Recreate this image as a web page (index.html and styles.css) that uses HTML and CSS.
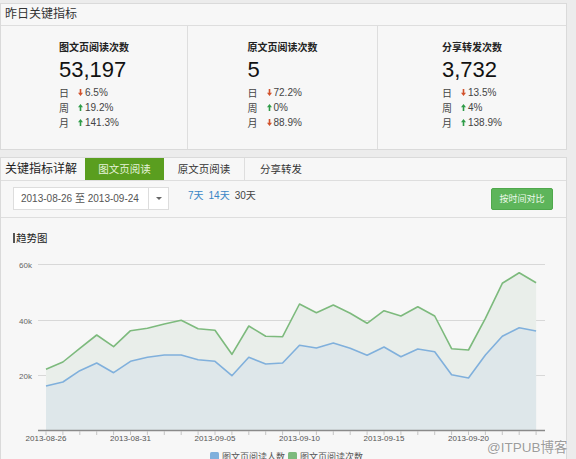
FILE: index.html
```html
<!DOCTYPE html>
<html lang="zh-CN">
<head>
<meta charset="utf-8">
<title>昨日关键指标</title>
<link rel="stylesheet" href="styles.css">
</head>
<body>
<div class="page">
  <section class="panel summary">
    <div class="summary-hd">昨日关键指标</div>
    <div class="metrics">
      <div class="metric">
        <div class="metric-inner">
          <div class="metric-title">图文页阅读次数</div>
          <div class="metric-value">53,197</div>
          <div class="metric-rows">
            <div class="row"><span class="row-label">日</span><svg class="arrow down" viewBox="0 0 5 7"><path d="M2.5 7 L5 3.8 H3.3 V0 H1.7 V3.8 H0 Z"/></svg><span>6.5%</span></div>
            <div class="row"><span class="row-label">周</span><svg class="arrow up" viewBox="0 0 5 7"><path d="M2.5 0 L5 3.2 H3.3 V7 H1.7 V3.2 H0 Z"/></svg><span>19.2%</span></div>
            <div class="row"><span class="row-label">月</span><svg class="arrow up" viewBox="0 0 5 7"><path d="M2.5 0 L5 3.2 H3.3 V7 H1.7 V3.2 H0 Z"/></svg><span>141.3%</span></div>
          </div>
        </div>
      </div>
      <div class="metric">
        <div class="metric-inner">
          <div class="metric-title">原文页阅读次数</div>
          <div class="metric-value">5</div>
          <div class="metric-rows">
            <div class="row"><span class="row-label">日</span><svg class="arrow down" viewBox="0 0 5 7"><path d="M2.5 7 L5 3.8 H3.3 V0 H1.7 V3.8 H0 Z"/></svg><span>72.2%</span></div>
            <div class="row"><span class="row-label">周</span><svg class="arrow up" viewBox="0 0 5 7"><path d="M2.5 0 L5 3.2 H3.3 V7 H1.7 V3.2 H0 Z"/></svg><span>0%</span></div>
            <div class="row"><span class="row-label">月</span><svg class="arrow down" viewBox="0 0 5 7"><path d="M2.5 7 L5 3.8 H3.3 V0 H1.7 V3.8 H0 Z"/></svg><span>88.9%</span></div>
          </div>
        </div>
      </div>
      <div class="metric">
        <div class="metric-inner">
          <div class="metric-title">分享转发次数</div>
          <div class="metric-value">3,732</div>
          <div class="metric-rows">
            <div class="row"><span class="row-label">日</span><svg class="arrow down" viewBox="0 0 5 7"><path d="M2.5 7 L5 3.8 H3.3 V0 H1.7 V3.8 H0 Z"/></svg><span>13.5%</span></div>
            <div class="row"><span class="row-label">周</span><svg class="arrow up" viewBox="0 0 5 7"><path d="M2.5 0 L5 3.2 H3.3 V7 H1.7 V3.2 H0 Z"/></svg><span>4%</span></div>
            <div class="row"><span class="row-label">月</span><svg class="arrow up" viewBox="0 0 5 7"><path d="M2.5 0 L5 3.2 H3.3 V7 H1.7 V3.2 H0 Z"/></svg><span>138.9%</span></div>
          </div>
        </div>
      </div>
    </div>
  </section>

  <section class="panel detail">
    <div class="tabs">
      <div class="tabs-title">关键指标详解</div>
      <div class="tab active">图文页阅读</div>
      <div class="tab plain">原文页阅读</div>
      <div class="tab last">分享转发</div>
    </div>
    <div class="toolbar">
      <div class="datebox">
        <div class="date-text">2013-08-26 至 2013-09-24</div>
        <div class="caret"><span class="caret-tri"></span></div>
      </div>
      <div class="ranges">
        <span class="range link">7天</span>
        <span class="range link">14天</span>
        <span class="range cur">30天</span>
      </div>
      <div class="compare-btn">按时间对比</div>
    </div>
    <div class="trend-title"><span class="trend-bar"></span>趋势图</div>
    <svg class="chart" width="565" height="220" viewBox="1 244 565 220">
      <g class="grid">
        <line x1="38" y1="264.5" x2="545" y2="264.5"/>
        <line x1="38" y1="320.5" x2="545" y2="320.5"/>
        <line x1="38" y1="375.5" x2="545" y2="375.5"/>
      </g>
      <g class="ylabels">
        <text x="32" y="267.5">60k</text>
        <text x="32" y="323.5">40k</text>
        <text x="32" y="378.5">20k</text>
      </g>
      <polygon class="area-green" points="46,369.3 62.9,362 79.8,348.3 96.7,335 113.6,346.7 130.5,330.7 147.4,328.3 164.3,324 181.2,320.3 198.1,328.7 215,330.3 231.9,354.3 248.8,326 265.7,336.3 282.6,336.7 299.5,304 316.4,312.7 333.3,305 350.2,313.3 367.1,323.3 384,310.7 400.9,316 417.8,306.7 434.7,316 451.6,348.7 468.5,350 485.4,318.3 502.3,283.3 519.2,272.7 536.1,282.7 536.1,430 46,430"/>
      <polygon class="area-blue" points="46,386 62.9,382 79.8,370.7 96.7,363 113.6,372.7 130.5,361.3 147.4,357.3 164.3,355 181.2,355 198.1,359.7 215,361.3 231.9,375.7 248.8,357.3 265.7,364 282.6,363 299.5,345.3 316.4,348 333.3,343 350.2,348.3 367.1,355.3 384,347 400.9,356.7 417.8,349 434.7,351.7 451.6,374.7 468.5,378 485.4,355 502.3,336.3 519.2,327.7 536.1,331 536.1,430 46,430"/>
      <polyline class="line-green" points="46,369.3 62.9,362 79.8,348.3 96.7,335 113.6,346.7 130.5,330.7 147.4,328.3 164.3,324 181.2,320.3 198.1,328.7 215,330.3 231.9,354.3 248.8,326 265.7,336.3 282.6,336.7 299.5,304 316.4,312.7 333.3,305 350.2,313.3 367.1,323.3 384,310.7 400.9,316 417.8,306.7 434.7,316 451.6,348.7 468.5,350 485.4,318.3 502.3,283.3 519.2,272.7 536.1,282.7"/>
      <polyline class="line-blue" points="46,386 62.9,382 79.8,370.7 96.7,363 113.6,372.7 130.5,361.3 147.4,357.3 164.3,355 181.2,355 198.1,359.7 215,361.3 231.9,375.7 248.8,357.3 265.7,364 282.6,363 299.5,345.3 316.4,348 333.3,343 350.2,348.3 367.1,355.3 384,347 400.9,356.7 417.8,349 434.7,351.7 451.6,374.7 468.5,378 485.4,355 502.3,336.3 519.2,327.7 536.1,331"/>
      <line class="axis" x1="38" y1="430.5" x2="545" y2="430.5"/>
      <path class="ticks" d="M46 431V435M62.9 431V435M79.8 431V435M96.7 431V435M113.6 431V435M130.5 431V435M147.4 431V435M164.3 431V435M181.2 431V435M198.1 431V435M215 431V435M231.9 431V435M248.8 431V435M265.7 431V435M282.6 431V435M299.5 431V435M316.4 431V435M333.3 431V435M350.2 431V435M367.1 431V435M384 431V435M400.9 431V435M417.8 431V435M434.7 431V435M451.6 431V435M468.5 431V435M485.4 431V435M502.3 431V435M519.2 431V435M536.1 431V435"/>
      <g class="xlabels">
        <text x="46" y="441">2013-08-26</text>
        <text x="130.5" y="441">2013-08-31</text>
        <text x="215" y="441">2013-09-05</text>
        <text x="299.5" y="441">2013-09-10</text>
        <text x="384" y="441">2013-09-15</text>
        <text x="468.5" y="441">2013-09-20</text>
      </g>
      <g class="legend">
        <rect class="lg-blue" x="210" y="452" width="9" height="9" rx="1.5"/>
        <text x="222" y="460">图文页阅读人数</text>
        <rect class="lg-green" x="288" y="452" width="9" height="9" rx="1.5"/>
        <text x="300" y="460">图文页阅读次数</text>
      </g>
    </svg>
  </section>
</div>
<div class="watermark">@ITPUB博客</div>
</body>
</html>
```
FILE: styles.css
```css
* { box-sizing: border-box; }

body {
  margin: 0;
  width: 576px;
  height: 459px;
  overflow: hidden;
  position: relative;
  background: #ececec;
  font-family: "Liberation Sans", "Noto Sans CJK SC", sans-serif;
  color: #333;
}

.page {
  padding-top: 3px;
  width: 567px;
}

.panel {
  background: #f7f7f7;
  border: 1px solid #dadada;
}

.summary { height: 147px; }

.summary-hd {
  height: 22px;
  border-bottom: 1px solid #dedede;
  font-size: 12px;
  line-height: 21px;
  padding-left: 4px;
  color: #333;
}

.metrics {
  display: grid;
  grid-template-columns: 186px 190px 189px;
  height: 123px;
}

.metric {
  display: flex;
  justify-content: center;
  padding-top: 15px;
}

.metric + .metric { border-left: 1px solid #dedede; }

.metric-title {
  font-size: 10px;
  font-weight: bold;
  line-height: 14px;
  color: #222;
}

.metric-value {
  font-size: 22px;
  line-height: 26px;
  margin-top: 2px;
  color: #111;
}

.metric-rows { margin-top: 2px; }

.row {
  display: flex;
  align-items: center;
  height: 15px;
  font-size: 10px;
  color: #444;
}

.row-label { width: 19px; }

.arrow {
  width: 5px;
  height: 7px;
  margin-right: 2px;
}
.arrow.up { fill: #2f9c48; }
.arrow.down { fill: #d2522c; }

.detail {
  margin-top: 7px;
  height: 310px;
}

.tabs {
  display: flex;
  height: 23px;
  border-bottom: 1px solid #dedede;
}

.tabs-title {
  width: 84px;
  padding-left: 4px;
  font-size: 12px;
  line-height: 22px;
  color: #222;
}

.tab {
  font-size: 10.5px;
  line-height: 22px;
  text-align: center;
  color: #333;
}

.tab.active {
  width: 79px;
  background: #5a9e1f;
  color: #e6f3da;
}

.tab.plain {
  width: 81px;
  border-right: 1px solid #dedede;
}

.tab.last { padding-left: 15px; }

.toolbar {
  display: flex;
  align-items: flex-start;
  height: 37px;
  border-bottom: 1px solid #dedede;
  padding: 6px 13px 0 12px;
}

.datebox {
  display: flex;
  width: 156px;
  height: 23px;
  background: #fff;
  border: 1px solid #dddddd;
}

.date-text {
  width: 135px;
  padding-left: 7px;
  font-size: 10px;
  line-height: 21px;
  color: #555;
  border-right: 1px solid #dddddd;
  white-space: nowrap;
}

.caret {
  flex: 1;
  display: flex;
  align-items: center;
  justify-content: center;
}

.caret-tri {
  width: 0;
  height: 0;
  border-top: 3.5px solid #666;
  border-left: 3.5px solid transparent;
  border-right: 3.5px solid transparent;
}

.ranges {
  display: flex;
  gap: 5px;
  margin-left: 19px;
  margin-top: 2px;
  font-size: 10px;
  line-height: 14px;
}

.range.link { color: #3a86c6; }
.range.cur { color: #444; }

.compare-btn {
  margin-left: auto;
  margin-top: 1px;
  width: 62px;
  height: 22px;
  background: #5db55a;
  border: 1px solid #4fa84c;
  border-radius: 2px;
  color: #eef9ec;
  font-size: 9px;
  line-height: 20px;
  text-align: center;
}

.trend-title {
  display: flex;
  align-items: center;
  padding: 14px 0 0 12px;
  height: 26px;
  font-size: 10.5px;
  line-height: 12px;
  color: #222;
}

.trend-bar {
  width: 2px;
  height: 10px;
  background: #555;
  margin-right: 1px;
}

.chart { display: block; }

.grid line { stroke: #d8d8d8; stroke-width: 1; }

.ylabels text {
  font-family: "Liberation Sans", sans-serif;
  font-size: 8px;
  fill: #666;
  text-anchor: end;
}

.xlabels text {
  font-family: "Liberation Sans", sans-serif;
  font-size: 8px;
  fill: #555;
  text-anchor: middle;
}

.area-green { fill: #e9eeea; }
.area-blue { fill: #dee7ea; }

.line-green {
  fill: none;
  stroke: #7dba7d;
  stroke-width: 1.6;
  stroke-linejoin: round;
}

.line-blue {
  fill: none;
  stroke: #80b0dc;
  stroke-width: 1.6;
  stroke-linejoin: round;
}

.axis { stroke: #8a8a8a; stroke-width: 1.5; }
.ticks { stroke: #c4c4c4; stroke-width: 1; }

.legend text {
  font-family: "Liberation Sans", "Noto Sans CJK SC", sans-serif;
  font-size: 9px;
  fill: #555;
}
.lg-blue { fill: #80b0dc; }
.lg-green { fill: #7dba7d; }

.watermark {
  position: absolute;
  left: 487px;
  top: 436px;
  font-size: 13.5px;
  color: #9c9c9c;
  text-shadow: 0 0 2px #fff, 0 0 1px #fff;
  white-space: nowrap;
}
```
